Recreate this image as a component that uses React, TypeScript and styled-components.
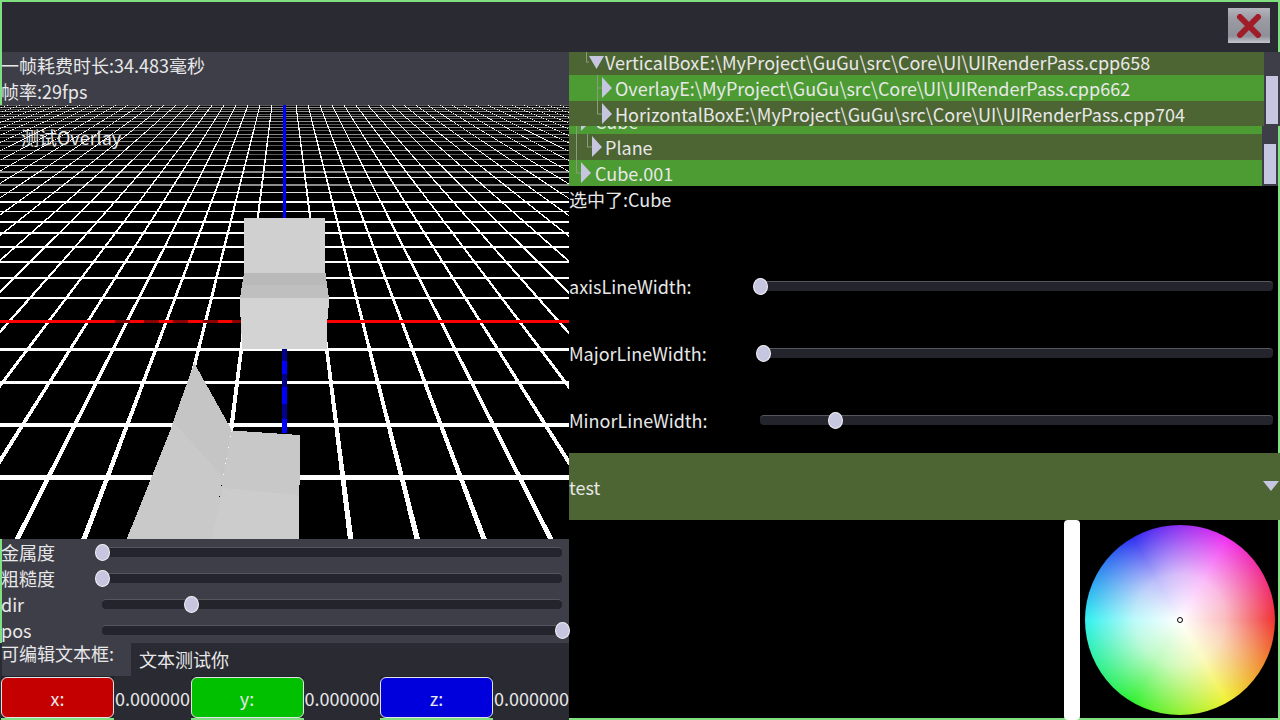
import React from "react";
import styled, { createGlobalStyle } from "styled-components";

const Global = createGlobalStyle`
  html, body { margin: 0; padding: 0; background: #000; overflow: hidden; }
  * { box-sizing: border-box; }
`;

const Screen = styled.div`
  width: 1280px;
  height: 720px;
  padding: 2px 2px 2px;
  background: #80e080;
  display: flex;
  flex-direction: column;
  font-family: "Noto Sans CJK SC", "Noto Sans", sans-serif;
  font-size: 18px;
  line-height: 26px;
  color: #e8e8e8;
  overflow: hidden;
`;

const TopBar = styled.div`
  flex: none;
  height: 50px;
  background: #2a2a33;
  display: flex;
  justify-content: flex-end;
  padding: 6px 8px 0 0;
`;

const CloseButton = styled.div`
  width: 42px;
  height: 35px;
  background: linear-gradient(#b4b4bc 0%, #9c9ca4 30%, #8f8f99 80%, #c4c4cc 100%);
  display: flex;
  align-items: center;
  justify-content: center;
`;

const Main = styled.div`
  flex: none;
  height: 666px;
  display: grid;
  grid-template-columns: 567px 709px;
`;

const LeftColumn = styled.div`
  width: 569px;
  height: 668px;
  margin-left: -2px;
  display: flex;
  flex-direction: column;
`;

const Stats = styled.div`
  flex: none;
  height: 53px;
  margin-left: 2px;
  background: #3e3e48;
`;

const StatLine = styled.div`
  margin-left: -1px;
`;

const Viewport = styled.div`
  flex: none;
  height: 434px;
  position: relative;
  background: #000;
  svg { display: block; }
`;

const OverlayLabel = styled.div`
  position: absolute;
  left: 21px;
  top: 19px;
  color: #ececec;
`;

const SliderPanel = styled.div`
  flex: none;
  margin-left: 2px;
  background: #3e3e48;
`;

const SliderRow = styled.div`
  height: 26px;
  display: grid;
  grid-template-columns: 100px 1fr;
  align-items: center;
  padding-right: 7px;
`;

const SliderLabel = styled.span`
  margin-left: -1px;
`;

const Track = styled.div`
  position: relative;
  height: 10px;
  background: #24242c;
  border-top: 1px solid #56565e;
  border-radius: 4px;
`;

const Thumb = styled.div`
  position: absolute;
  top: -4px;
  width: 15px;
  height: 17px;
  margin-left: -7.5px;
  border-radius: 50%;
  background: #c6c6e0;
  border: 1px solid #f2f2f6;
`;

const EditRow = styled.div`
  flex: none;
  height: 33px;
  display: grid;
  grid-template-columns: 131px 1fr;
  background: #2a2a33;
`;

const EditLabel = styled.div`
  margin-left: 2px;
  background: #3e3e48;
  line-height: 20px;
  text-indent: -1px;
`;

const EditField = styled.div`
  padding: 3px 0 0 8px;
`;

const VectorRow = styled.div`
  flex: none;
  height: 44px;
  display: grid;
  grid-template-columns: repeat(3, 189.5px);
  background: #2a2a33;
`;

const VectorCell = styled.div`
  display: flex;
  align-items: flex-start;
`;

const AxisFrame = styled.div`
  flex: none;
  width: 113px;
  margin: 0 1px;
  height: 44px;
  padding-top: 1px;
  background: #22222a;
  border-bottom: 2px solid #80e080;
`;

const AxisButton = styled.div<{ $color: string }>`
  height: 41px;
  border-radius: 6px;
  border: 1px solid #e4e4e8;
  background: ${(p) => p.$color};
  display: flex;
  align-items: center;
  justify-content: center;
`;

const AxisValue = styled.div`
  padding-top: 9px;
  white-space: nowrap;
`;

const RightColumn = styled.div`
  background: #000;
  display: flex;
  flex-direction: column;
  height: 666px;
`;

const TreeBlock = styled.div<{ $height: number; $inset: number }>`
  flex: none;
  height: ${(p) => p.$height}px;
  margin-right: ${(p) => p.$inset}px;
  display: grid;
  grid-template-columns: 1fr 16px;
`;

const TreeList = styled.div<{ $bottom?: boolean }>`
  overflow: hidden;
  display: flex;
  flex-direction: column;
  justify-content: ${(p) => (p.$bottom ? "flex-end" : "flex-start")};
`;

const TreeRow = styled.div<{ $active: boolean }>`
  flex: none;
  height: 26px;
  background: ${(p) => (p.$active ? "#4c9b33" : "#4d6433")};
  display: flex;
  align-items: center;
  white-space: nowrap;
  svg { flex: none; display: block; }
`;

const TreeClip = styled.div`
  margin-top: -3px;
  flex: none;
`;

const ScrollTrack = styled.div<{ $top: number; $gap: number }>`
  background: #3e3e48;
  padding: ${(p) => p.$top}px 2px ${(p) => p.$gap}px;
  display: flex;
`;

const ScrollThumb = styled.div`
  flex: 1;
  background: #c6c6e0;
`;

const SelectedRow = styled.div`
  flex: none;
  height: 66px;
`;

const SettingRow = styled.div<{ $label: number }>`
  flex: none;
  height: 67px;
  display: grid;
  grid-template-columns: ${(p) => p.$label}px 1fr;
  align-items: center;
  padding-right: 5px;
`;

const DropDown = styled.div`
  flex: none;
  height: 67px;
  margin-right: -2px;
  background: #4d6433;
  display: flex;
  align-items: center;
  justify-content: space-between;
  padding-right: 1px;
  svg { display: block; }
`;

const ColorArea = styled.div`
  flex: 1;
  display: flex;
  justify-content: flex-end;
  padding-right: 3px;
  min-height: 0;
`;

const ValueBar = styled.div`
  width: 16px;
  height: 200px;
  background: #fff;
  border-radius: 4px;
`;

const Wheel = styled.div`
  position: relative;
  width: 190px;
  height: 190px;
  margin: 5px 0 0 5px;
  border-radius: 50%;
  background:
    radial-gradient(closest-side, #fff 0%, rgba(255, 255, 255, 0.68) 48%, rgba(255, 255, 255, 0) 100%),
    conic-gradient(from 90deg, #f03030, #f0f030, #30f030, #30f0f0, #3030f0, #f030f0, #f03030);
`;

const WheelMarker = styled.div`
  position: absolute;
  left: 92px;
  top: 92px;
  width: 6px;
  height: 6px;
  border-radius: 50%;
  background: #fff;
  border: 1px solid #000;
`;

const farLines = Array.from({ length: 23 }, (_, i) => 21 + i).map((n) => {
  const y = Math.round(22 + 3570 / n);
  const even = n % 2 === 0;
  const fill = y < 165 ? (even ? "#8a8a8a" : "#585858") : even ? "#8c8c8c" : "#e0e0e0";
  return { y, fill, height: even && y >= 165 ? 2 : 1 };
});
const nearLines = [
  { y: 477.5, w: 5 }, { y: 425, w: 4 }, { y: 382.5, w: 3 }, { y: 349.5, w: 3 },
  { y: 298, w: 2 }, { y: 278, w: 2 }, { y: 261.5, w: 2 }, { y: 246.5, w: 2 },
  { y: 233, w: 2 }, { y: 222, w: 2 }, { y: 211, w: 1 }, { y: 202, w: 2 },
];
const spokes = Array.from({ length: 49 }, (_, i) => i - 24).filter((i) => i !== 0);

const wedge = (i: number) => {
  const r = 0.126;
  const half = 0.0052;
  const x = (o: number) => (284 + (i * r + o) * 530).toFixed(1);
  return `284,10 ${x(-half)},540 ${x(half)},540`;
};

const redDashes = [115, 144, 173, 203, 232];
const blueDashes = [
  { y: 349, h: 12, c: "#00008b" }, { y: 361, h: 13, c: "#0000ff" }, { y: 374, h: 13, c: "#00008b" },
  { y: 387, h: 17, c: "#0000ff" }, { y: 404, h: 15, c: "#00008b" }, { y: 419, h: 14, c: "#0000ff" },
];

const Scene = () => (
  <svg width="569" height="434" viewBox="0 105 569 434">
    <g shapeRendering="crispEdges">
      {farLines.map((l) => (
        <rect key={l.y} x="0" y={l.y} width="569" height={l.height} fill={l.fill} />
      ))}
      {spokes.map((i) => (
        <polygon key={i} points={wedge(i)} fill="#fff" />
      ))}
      {nearLines.map((l) => (
        <rect key={l.y} x="0" y={l.y - l.w / 2} width="569" height={l.w} fill="#fff" />
      ))}
      <rect x="0" y="320" width="569" height="3" fill="#f00" />
      {redDashes.map((x) => (
        <rect key={x} x={x} y="320" width="15" height="3" fill="#8b0000" />
      ))}
      <rect x="283" y="105" width="3" height="114" fill="#0000ff" />
      {blueDashes.map((b) => (
        <rect key={b.y} x="282" y={b.y} width="5" height={b.h} fill={b.c} />
      ))}
      <polygon points="244,218 325,218 325,273 244,273" fill="#d0d0d0" />
      <polygon points="244,273 325.5,273 327,285 242,285" fill="#b9b9b9" />
      <polygon points="242,285 327,285 329,298 240,298" fill="#bfbfbf" />
      <polygon points="240,297.5 329,297.5 329,308 327.7,308 327,349 241.7,349 241.3,317 240,317" fill="#d3d3d3" />
      <polygon points="172,426 173,422 194.3,363 231.7,430 223,477 211.7,539 126.7,539" fill="#c9c9c9" />
      <polygon points="173,422 194.3,363 231.7,430 223,477" fill="#c5c5c5" />
      <polygon points="231.7,430.5 300,435 299,539 211.7,539" fill="#c8c8c8" />
      <polygon points="223,488 299,495 299,539 211.7,539" fill="#cccccc" />
    </g>
  </svg>
);

const CloseIcon = () => (
  <svg width="26" height="24" viewBox="0 0 26 24">
    <path d="M4 3 L22 21 M22 3 L4 21" stroke="#a01c28" strokeWidth="6" strokeLinecap="round" fill="none" />
  </svg>
);

type Twig = { width: number; trunks: [number, number, number][]; branch?: [number, number]; open?: boolean; tip: number };

const TreeGlyph = ({ width, trunks, branch, open, tip }: Twig) => (
  <svg width={width} height="26" viewBox={`0 0 ${width} 26`}>
    <g stroke="#8c9a80" strokeWidth="1" fill="none">
      {trunks.map(([x, a, b]) => (
        <path key={`${x}-${a}`} d={`M${x} ${a} V${b}`} />
      ))}
      {branch && <path d={`M${branch[0]} 13 H${branch[1]}`} />}
    </g>
    {open ? (
      <polygon points={`${tip},7 ${tip + 15},7 ${tip + 7.5},20`} fill="#c6c6e0" />
    ) : (
      <polygon points={`${tip},2 ${tip},23 ${tip + 10},13`} fill="#c6c6e0" />
    )}
  </svg>
);

const upperRows = [
  { text: "VerticalBoxE:\\MyProject\\GuGu\\src\\Core\\UI\\UIRenderPass.cpp658", active: false, glyph: { width: 36, trunks: [[17.5, 0, 13]], branch: [17, 20], open: true, tip: 20 } as Twig },
  { text: "OverlayE:\\MyProject\\GuGu\\src\\Core\\UI\\UIRenderPass.cpp662", active: true, glyph: { width: 46, trunks: [[28.5, 0, 26]], branch: [28, 33], tip: 33 } as Twig },
  { text: "HorizontalBoxE:\\MyProject\\GuGu\\src\\Core\\UI\\UIRenderPass.cpp704", active: false, glyph: { width: 46, trunks: [[28.5, 0, 13]], branch: [28, 33], tip: 33 } as Twig },
];

const lowerRows = [
  { text: "Cube", active: true, glyph: { width: 26, trunks: [[7.5, 0, 26]], branch: [7, 12], tip: 12 } as Twig },
  { text: "Plane", active: false, glyph: { width: 36, trunks: [[7.5, 0, 26], [18.5, 0, 13]], branch: [18, 23], tip: 23 } as Twig },
  { text: "Cube.001", active: true, glyph: { width: 26, trunks: [[7.5, 0, 13]], branch: [7, 12], tip: 12 } as Twig },
];

const Slider = ({ value }: { value: number }) => (
  <Track>
    <Thumb style={{ left: `${value}%` }} />
  </Track>
);

const leftSliders = [
  { label: "金属度", value: 0 },
  { label: "粗糙度", value: 0 },
  { label: "dir", value: 19.5 },
  { label: "pos", value: 100 },
];

const settings = [
  { label: "axisLineWidth:", width: 191, value: 0 },
  { label: "MajorLineWidth:", width: 194, value: 0 },
  { label: "MinorLineWidth:", width: 191, value: 14.8 },
];

const axes = [
  { name: "x:", color: "#c40000" },
  { name: "y:", color: "#00c000" },
  { name: "z:", color: "#0000dc" },
];

export default function App() {
  return (
    <Screen>
      <Global />
      <TopBar>
        <CloseButton>
          <CloseIcon />
        </CloseButton>
      </TopBar>
      <Main>
        <LeftColumn>
          <Stats>
            <StatLine>一帧耗费时长:34.483毫秒</StatLine>
            <StatLine>帧率:29fps</StatLine>
          </Stats>
          <Viewport>
            <Scene />
            <OverlayLabel>测试Overlay</OverlayLabel>
          </Viewport>
          <SliderPanel>
            {leftSliders.map((s) => (
              <SliderRow key={s.label}>
                <SliderLabel>{s.label}</SliderLabel>
                <Slider value={s.value} />
              </SliderRow>
            ))}
          </SliderPanel>
          <EditRow>
            <EditLabel>可编辑文本框:</EditLabel>
            <EditField>文本测试你</EditField>
          </EditRow>
          <VectorRow>
            {axes.map((a) => (
              <VectorCell key={a.name}>
                <AxisFrame>
                  <AxisButton $color={a.color}>{a.name}</AxisButton>
                </AxisFrame>
                <AxisValue>0.000000</AxisValue>
              </VectorCell>
            ))}
          </VectorRow>
        </LeftColumn>
        <RightColumn>
          <TreeBlock $height={74} $inset={-2}>
            <TreeList>
              <TreeClip>
                {upperRows.map((r) => (
                  <TreeRow key={r.text} $active={r.active}>
                    <TreeGlyph {...r.glyph} />
                    <span>{r.text}</span>
                  </TreeRow>
                ))}
              </TreeClip>
            </TreeList>
            <ScrollTrack $top={24} $gap={2}>
              <ScrollThumb />
            </ScrollTrack>
          </TreeBlock>
          <TreeBlock $height={60} $inset={0}>
            <TreeList $bottom>
              {lowerRows.map((r) => (
                <TreeRow key={r.text} $active={r.active}>
                  <TreeGlyph {...r.glyph} />
                  <span>{r.text}</span>
                </TreeRow>
              ))}
            </TreeList>
            <ScrollTrack $top={18} $gap={2}>
              <ScrollThumb />
            </ScrollTrack>
          </TreeBlock>
          <SelectedRow>选中了:Cube</SelectedRow>
          {settings.map((s) => (
            <SettingRow key={s.label} $label={s.width}>
              <span>{s.label}</span>
              <Slider value={s.value} />
            </SettingRow>
          ))}
          <DropDown>
            <span>test</span>
            <svg width="16" height="11" viewBox="0 0 16 11">
              <polygon points="0,0 16,0 8,10" fill="#c6c6e0" />
            </svg>
          </DropDown>
          <ColorArea>
            <ValueBar />
            <Wheel>
              <WheelMarker />
            </Wheel>
          </ColorArea>
        </RightColumn>
      </Main>
    </Screen>
  );
}
